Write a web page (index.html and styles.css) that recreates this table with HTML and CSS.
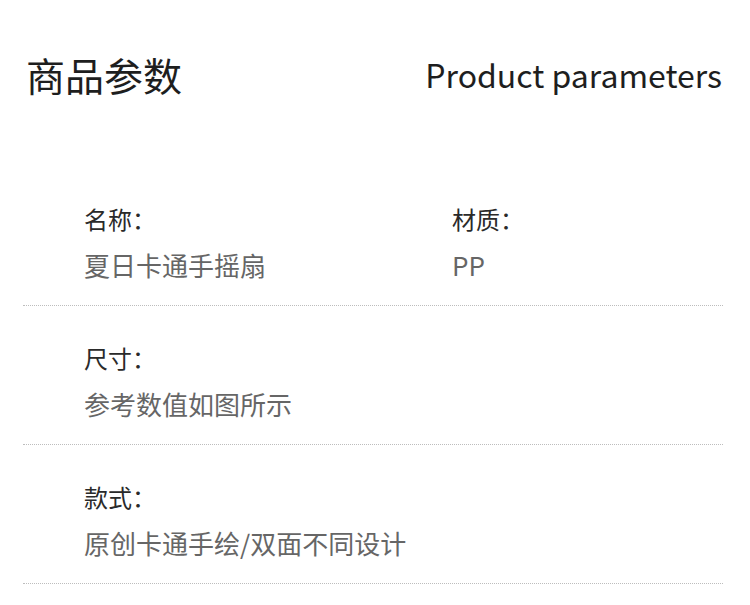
FILE: index.html
```html
<!DOCTYPE html>
<html lang="zh-CN">
  <head>
    <meta charset="UTF-8" />
    <title>商品参数</title>
    <link rel="stylesheet" href="styles.css">
  </head>
  <body>
    <div class="page">
      <div class="header">
        <h1 class="title">商品参数</h1>
        <div class="subtitle">Product parameters</div>
      </div>

      <div class="params">
        <div class="row">
          <div class="item">
            <div class="label">名称：</div>
            <div class="value">夏日卡通手摇扇</div>
          </div>
          <div class="item">
            <div class="label">材质：</div>
            <div class="value">PP</div>
          </div>
        </div>

        <div class="row">
          <div class="item">
            <div class="label">尺寸：</div>
            <div class="value">参考数值如图所示</div>
          </div>
        </div>

        <div class="row">
          <div class="item wide">
            <div class="label">款式：</div>
            <div class="value">原创卡通手绘/双面不同设计</div>
          </div>
        </div>
      </div>
    </div>
  </body>
</html>
```

FILE: styles.css
```css
* {
  margin: 0;
  padding: 0;
  box-sizing: border-box;
}

body {
  width: 750px;
  height: 605px;
  overflow: hidden;
  background: #ffffff;
  font-family: "Noto Sans CJK SC", "Noto Sans", sans-serif;
  color: #222;
}

.header {
  display: flex;
  justify-content: space-between;
  align-items: center;
  padding: 46px 28px 0 26px;
  height: 102px;
  margin-bottom: 65px;
}

.title {
  font-size: 39px;
  font-weight: 400;
  line-height: 56px;
  color: #1e1e1e;
}

.subtitle {
  font-size: 32px;
  line-height: 56px;
  color: #1e1e1e;
}

.params {
  margin: 0 27px 0 23px;
}

.row {
  display: grid;
  grid-template-columns: 368px 1fr;
  padding: 32px 0 14px 61px;
  border-bottom: 1px dotted #bdbdbd;
}

.wide {
  grid-column: 1 / -1;
}

.label {
  font-size: 24px;
  line-height: 40px;
  color: #2a2a2a;
}

.value {
  font-size: 26px;
  line-height: 52px;
  color: #666;
}
```
